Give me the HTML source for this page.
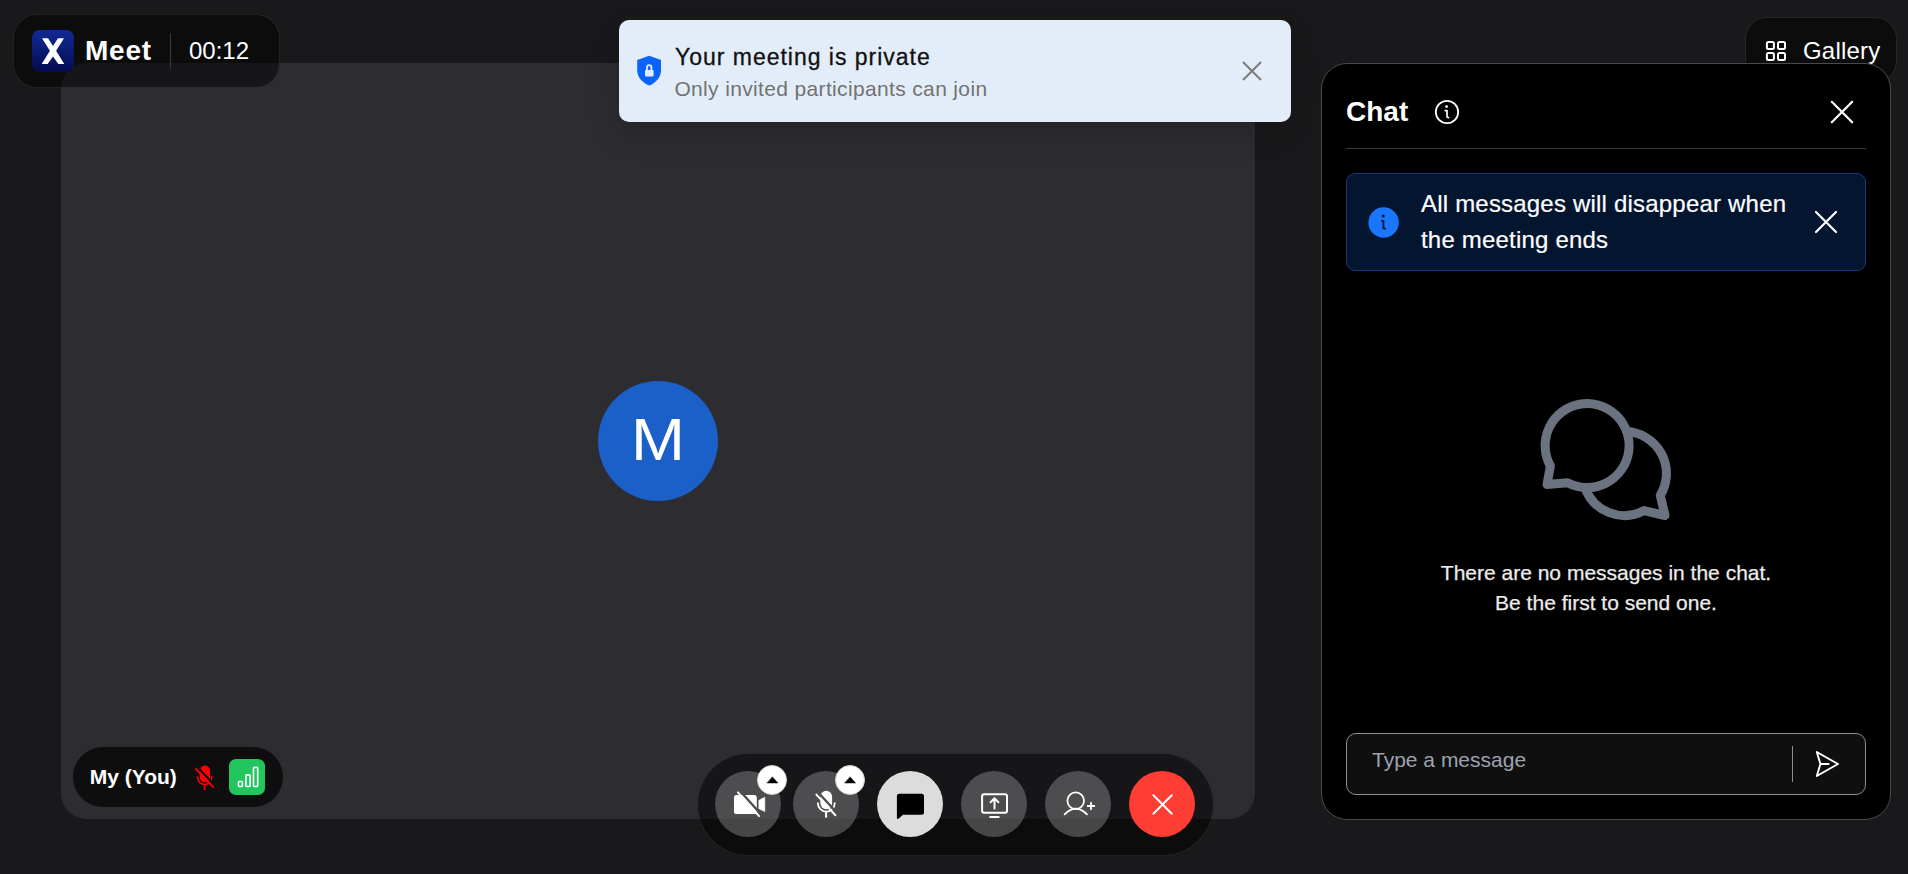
<!DOCTYPE html>
<html>
<head>
<meta charset="utf-8">
<style>
*{box-sizing:border-box;margin:0;padding:0}
html,body{width:1908px;height:874px;overflow:hidden;background:#19191b;font-family:"Liberation Sans",sans-serif;color:#fff}
.abs{position:absolute}
.t{position:absolute;white-space:nowrap;line-height:1}
#tile{left:61px;top:63px;width:1194px;height:756px;border-radius:26px;background:#2c2c31}
#badge{left:13px;top:14px;width:267px;height:73.5px;border-radius:24px;background:rgba(0,0,0,0.5);border:1px solid rgba(255,255,255,0.09)}
#logo{left:32px;top:30px;width:42px;height:42px;border-radius:8px;background:linear-gradient(#112a94,#050b50)}
#avatar{left:598px;top:381px;width:120px;height:120px;border-radius:60px;background:#1b5fc9}
#toast{left:619px;top:20px;width:672px;height:102px;border-radius:10px;background:#e3edf9;box-shadow:0 10px 30px rgba(0,0,0,0.18)}
#gallery{left:1745px;top:17px;width:152px;height:66px;border-radius:22px;background:rgba(0,0,0,0.5);border:1px solid rgba(255,255,255,0.1)}
#chat{left:1321px;top:63px;width:570px;height:757px;border-radius:26px;background:#000;border:1px solid #4a4a4c}
#hdiv{left:1346px;top:148px;width:520px;height:1px;background:#3a3a3c}
#banner{left:1346px;top:173px;width:520px;height:98px;border-radius:9px;background:#04152f;border:1px solid #16387a}
#input{left:1346px;top:733px;width:520px;height:62px;border-radius:10px;background:#0f0f10;border:1.5px solid #8e8e90}
#idiv{left:1792px;top:746px;width:1px;height:36px;background:#8e8e90}
#pill{left:73px;top:747px;width:210px;height:60px;border-radius:30px;background:rgba(0,0,0,0.68)}
#green{left:229px;top:759px;width:36px;height:36px;border-radius:7px;background:#22c55e}
#bar{left:696.5px;top:752.5px;width:517px;height:103px;border-radius:52px;background:rgba(0,0,0,0.5);border:1px solid rgba(255,255,255,0.09)}
.btn{position:absolute;top:771px;width:66px;height:66px;border-radius:33px;background:rgba(255,255,255,0.24)}
.caret{position:absolute;top:765px;width:30px;height:30px;border-radius:15px;background:#fff;border:1px solid #d0d0d0}
</style>
</head>
<body>
<div id="tile" class="abs"></div>
<div id="avatar" class="abs"></div>
<div class="t" style="left:558px;top:409.8px;width:200px;text-align:center;font-size:60px;color:#fff;transform:scaleX(1.08)">M</div>

<div id="badge" class="abs"></div>
<div id="logo" class="abs"></div>

<div class="t" style="left:85px;top:37px;font-size:28px;font-weight:bold;letter-spacing:0.8px">Meet</div>
<div class="abs" style="left:170px;top:33px;width:1px;height:36px;background:#3a3a3c"></div>
<div class="t" style="left:189px;top:39px;font-size:24px">00:12</div>

<div id="toast" class="abs"></div>
<div class="t" style="left:675px;top:45.5px;font-size:23px;letter-spacing:0.98px;color:#111;-webkit-text-stroke:0.3px #111">Your meeting is private</div>
<div class="t" style="left:674.4px;top:77.6px;font-size:21px;letter-spacing:0.35px;color:#727272">Only invited participants can join</div>

<div id="gallery" class="abs"></div>
<div class="t" style="left:1803px;top:38.8px;font-size:24px;letter-spacing:0.2px">Gallery</div>

<div id="chat" class="abs"></div>
<div class="t" style="left:1346px;top:98px;font-size:28px;font-weight:bold">Chat</div>
<div id="hdiv" class="abs"></div>
<div id="banner" class="abs"></div>
<div class="t" style="left:1421px;top:186px;font-size:24px;line-height:36px;letter-spacing:0.2px;-webkit-text-stroke:0.2px #fff">All messages will disappear when<br>the meeting ends</div>
<div class="t" style="left:1406px;top:558.2px;-webkit-text-stroke:0.25px #ececec;width:400px;text-align:center;font-size:21px;line-height:30px;color:#ececec;white-space:normal">There are no messages in the chat.<br>Be the first to send one.</div>
<div id="input" class="abs"></div>
<div class="t" style="left:1372px;top:749px;font-size:21px;color:#9ca3af">Type a message</div>
<div id="idiv" class="abs"></div>

<div id="pill" class="abs"></div>
<div class="t" style="left:89.7px;top:766px;font-size:21px;font-weight:bold">My (You)</div>
<div id="green" class="abs"></div>

<div id="bar" class="abs"></div>
<div class="btn" style="left:715px"></div>
<div class="btn" style="left:793px"></div>
<div class="btn" style="left:877px;background:#dcdcdc"></div>
<div class="btn" style="left:961px"></div>
<div class="btn" style="left:1045px"></div>
<div class="btn" style="left:1129px;background:#ff3e33"></div>
<div class="caret" style="left:757px"></div>
<div class="caret" style="left:835px"></div>
<svg class="abs" style="left:0;top:0" width="1908" height="874" viewBox="0 0 1908 874" fill="none" stroke-linecap="round" stroke-linejoin="round">
<defs>
<mask id="camMask" maskUnits="userSpaceOnUse" x="700" y="770" width="100" height="70">
<rect x="700" y="770" width="100" height="70" fill="#fff"/>
<path d="M739.6,790.5 L761.4,814.7" stroke="#000" stroke-width="2.4"/>
</mask>
<mask id="micMask" maskUnits="userSpaceOnUse" x="790" y="770" width="80" height="70">
<rect x="790" y="770" width="80" height="70" fill="#fff"/>
<path d="M818,792.3 L837.8,813.8" stroke="#000" stroke-width="2.4"/>
</mask>
<mask id="redMicMask" maskUnits="userSpaceOnUse" x="180" y="750" width="50" height="50">
<rect x="180" y="750" width="50" height="50" fill="#fff"/>
<path d="M197.3,767 L215.5,786.1" stroke="#000" stroke-width="2.2"/>
</mask>
</defs>
<!-- logo X -->
<path d="M42,38.2 L48,38.2 L53,45.9 L58,38.2 L64,38.2 L56.1,50.8 L64.3,64 L58.3,64 L53,56.4 L47.7,64 L41.7,64 L49.9,50.8 Z" fill="#fff"/>
<!-- shield -->
<path d="M649.2,55.8 L661,60.1 L661,70.7 C661,77 656,82.5 649.2,85.6 C642.4,82.5 637.2,77 637.2,70.7 L637.2,60.1 Z" fill="#0a64fb"/>
<rect x="645" y="70" width="8.6" height="6.4" rx="0.8" fill="#e3edf9"/>
<path d="M647,70.3 V67.4 A2.2,2.2 0 0 1 651.4,67.4 V70.3" stroke="#e3edf9" stroke-width="1.8"/>
<!-- toast X -->
<path d="M1243,62 L1261,80 M1261,62 L1243,80" stroke="#7b7b7b" stroke-width="2" stroke-linecap="butt"/>
<!-- gallery grid -->
<g stroke="#fff" stroke-width="2">
<rect x="1766.9" y="41.9" width="7" height="7" rx="1.5"/>
<rect x="1778" y="41.9" width="7" height="7" rx="1.5"/>
<rect x="1766.9" y="53" width="7" height="7" rx="1.5"/>
<rect x="1778" y="53" width="7" height="7" rx="1.5"/>
</g>
<!-- chat info -->
<circle cx="1447" cy="112" r="11.2" stroke="#fff" stroke-width="1.8"/>
<circle cx="1446.6" cy="106.6" r="1.4" fill="#fff"/>
<path d="M1445.2,110.6 H1447 V116.6 Q1447,117.6 1448.6,117.6" stroke="#fff" stroke-width="1.7"/>
<!-- chat close -->
<path d="M1831.8,101.8 L1852.2,122.2 M1852.2,101.8 L1831.8,122.2" stroke="#fff" stroke-width="2.2"/>
<!-- banner info -->
<circle cx="1383.6" cy="222.5" r="15.2" fill="#1a76fc"/>
<circle cx="1383.2" cy="215.9" r="1.5" fill="#04152f"/>
<path d="M1382,220.9 H1383.4 V227.4 Q1383.4,228.7 1385.1,228.7" stroke="#04152f" stroke-width="1.9"/>
<!-- banner close -->
<path d="M1816,212 L1836,232 M1836,212 L1816,232" stroke="#fff" stroke-width="2.2"/>
<!-- chats icon -->
<g stroke="#6b7280" stroke-width="9">
<path d="M1550.4,466 A42,42 0 1 1 1567.6,482.8 L1547,484.5 Z"/>
<path d="M1626.6,431.6 A42,42 0 0 1 1660.3,495.4 L1665,515.5 L1644.2,510.6 A42,42 0 0 1 1584.9,487.4"/>
</g>
<!-- send -->
<path d="M1816.8,752 L1838,764 L1816.8,776 L1820.4,764 Z M1820.4,764 H1828.6" stroke="#fff" stroke-width="1.9"/>
<!-- red mic -->
<g mask="url(#redMicMask)">
<rect x="199.8" y="765.6" width="10.3" height="16.6" rx="5.15" fill="#ff0000"/>
<path d="M197.6,776.8 V777.6 A7,7 0 0 0 211.6,777.6 V776.8" stroke="#ff0000" stroke-width="1.6"/>
<path d="M204.6,785 V789.6" stroke="#ff0000" stroke-width="1.6"/>
</g>
<path d="M196,769.1 L213.2,787.2" stroke="#ff0000" stroke-width="1.9"/>
<!-- bars -->
<g stroke="#fff" stroke-width="1.6">
<rect x="238.4" y="781.5" width="4" height="5" rx="1"/>
<rect x="245.9" y="774.9" width="4.2" height="11.6" rx="1"/>
<rect x="253.5" y="767.4" width="4.2" height="19.1" rx="1"/>
</g>
<!-- camera off -->
<g mask="url(#camMask)" fill="#fff">
<rect x="734" y="794.9" width="22.8" height="19.1" rx="2.6"/>
<path d="M759,800.2 L764.8,797.2 L764.8,811.6 L759,808.7 Z" stroke="#fff" stroke-width="0.6"/>
</g>
<path d="M737.9,792.4 L759.1,816.1" stroke="#fff" stroke-width="2"/>
<!-- mic off -->
<g mask="url(#micMask)">
<rect x="820.4" y="790.7" width="11.7" height="18.5" rx="5.85" fill="#fff"/>
<path d="M817.9,803.2 A8.4,8.4 0 0 0 834.7,803.2" stroke="#fff" stroke-width="1.8"/>
<path d="M826.1,811.5 V817.6" stroke="#fff" stroke-width="2.1" stroke-linecap="butt"/>
</g>
<path d="M816.4,794.6 L835.4,815.3" stroke="#fff" stroke-width="2"/>
<!-- chat btn icon -->
<path d="M899.4,793.8 H921.5 Q924,793.8 924,796.3 V812.3 Q924,814.8 921.5,814.8 H903 L898.8,818.6 Q896.9,819.8 896.9,817.5 V796.3 Q896.9,793.8 899.4,793.8 Z" fill="#000"/>
<!-- share -->
<rect x="982.1" y="794.2" width="24.9" height="18.5" rx="2" stroke="#fff" stroke-width="2"/>
<rect x="989.2" y="815.9" width="10.5" height="2.1" rx="1" fill="#fff"/>
<path d="M994.5,808.5 V798.6 M990.6,802.2 L994.5,798.3 L998.4,802.2" stroke="#fff" stroke-width="2"/>
<!-- add user -->
<circle cx="1075.7" cy="800.7" r="8.3" stroke="#fff" stroke-width="1.8"/>
<path d="M1064.6,814.3 Q1075.8,803.2 1087,814.3" stroke="#fff" stroke-width="1.8"/>
<path d="M1087.7,806 H1094.3 M1091,802.7 V809.3" stroke="#fff" stroke-width="1.8"/>
<!-- hang up -->
<path d="M1153.4,795.3 L1171.8,813.7 M1171.8,795.3 L1153.4,813.7" stroke="#fff" stroke-width="2"/>
<!-- carets -->
<path d="M767.2,783 L777.9,783 L772.5,777 Z" fill="#000" stroke="#000" stroke-width="0.5"/>
<path d="M844.9,783 L855.6,783 L850.2,777 Z" fill="#000" stroke="#000" stroke-width="0.5"/>
</svg>
</body>
</html>
